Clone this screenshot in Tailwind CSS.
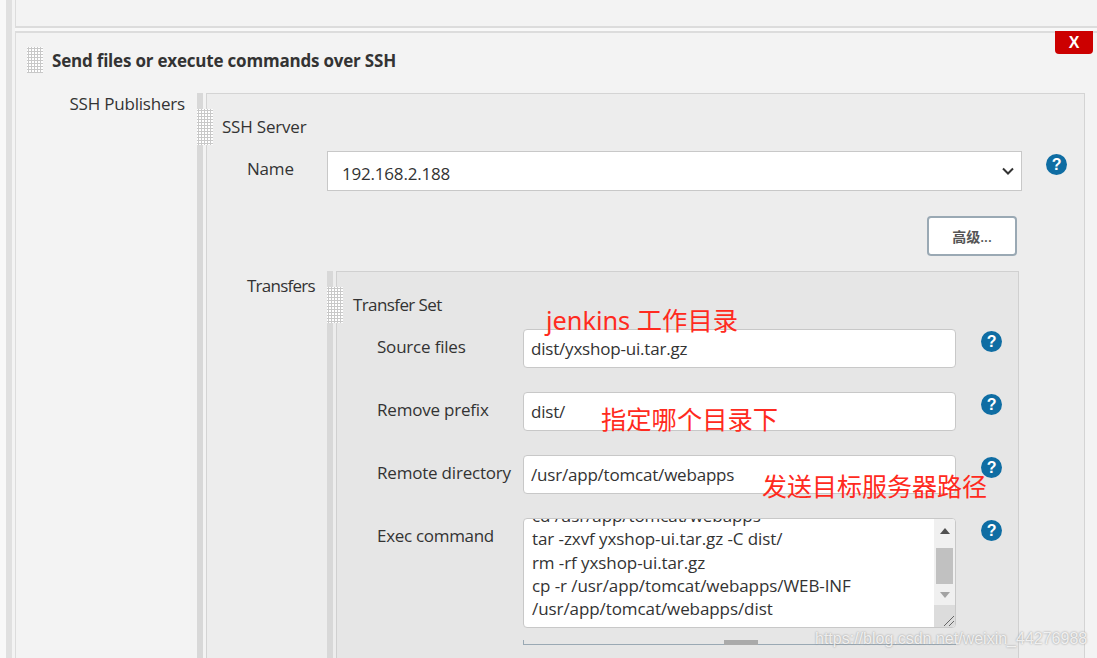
<!DOCTYPE html>
<html lang="zh">
<head>
<meta charset="UTF-8">
<title>Send files or execute commands over SSH</title>
<script src="https://cdn.jsdelivr.net/npm/@tailwindcss/browser@4"></script>
</head>
<body class="bg-[#f8f8f8]">
<div id="page" class="relative w-[1097px] h-[658px] overflow-hidden flex font-['Open_Sans','Noto_Sans_CJK_SC',sans-serif] text-[17px] tracking-[-0.2px] text-[#333]">
  <!-- rail on the left -->
  <div class="w-[6px] shrink-0"></div>
  <div class="w-[6px] shrink-0 bg-[#e0e0e0]"></div>
  <div class="w-[3px] shrink-0 bg-[#f3f3f3]"></div>

  <main class="flex-1 flex flex-col bg-[#f8f8f8]">
    <div class="h-[28px] shrink-0 bg-[#f3f3f3] border-l border-b-2 border-[#dcdcdc]"></div>
    <div class="h-[3px] shrink-0"></div>

    <section class="relative flex-1 bg-[#f3f3f3] border-l border-t-2 border-[#dcdcdc]">
      <button class="absolute right-[4px] top-[-2px] w-[38px] h-[23px] bg-[#cc0000] rounded-b-[4px] text-white font-bold text-[16px] font-['Liberation_Sans',sans-serif] tracking-normal leading-[23px]">X</button>
      <div class="absolute left-[11px] top-[14px] w-[16px] h-[26px] bg-white bg-[radial-gradient(#c8c8c8_1px,transparent_1.2px)] bg-[length:3px_3px]"></div>

      <h2 class="pl-[36px] pt-[15px] h-[60px] font-bold text-[#333] text-[17px] leading-[26px]">Send files or execute commands over SSH</h2>

      <div class="flex">
        <div class="w-[169px] shrink-0 text-right leading-[22px]">SSH Publishers</div>
        <!-- ssh server block -->
        <div class="ml-[12px] w-[6px] shrink-0 bg-[#d8d8d8]"></div>
        <div class="relative ml-[3px] w-[879px] h-[600px] bg-[#ededed] border border-[#d4d4d4]">
          <div class="absolute left-[-10px] top-[15px] w-[16px] h-[36px] bg-white bg-[radial-gradient(#c8c8c8_1px,transparent_1.2px)] bg-[length:3px_3px]"></div>
          <div class="pl-[15px] pt-[21px] leading-[24px]">SSH Server</div>

          <div class="flex mt-[12px]">
            <label class="w-[120px] pl-[40px] pt-[6px] leading-[24px]">Name</label>
            <div class="w-[695px] h-[40px] bg-white border border-[#c8c8c8] flex items-center justify-between pl-[14px] pr-[7px]">
              <span class="pt-[6px]">192.168.2.188</span>
              <svg width="12" height="8" viewBox="0 0 12 8"><path d="M1 1.5 6 6.5 11 1.5" fill="none" stroke="#333" stroke-width="2"/></svg>
            </div>
            <div class="ml-[24px] pt-[3px]">
              <svg width="21" height="21" viewBox="0 0 21 21"><circle cx="10.5" cy="10.5" r="10.5" fill="#0f6da3"/><text x="10.5" y="16" text-anchor="middle" fill="#fff" font-family="Liberation Sans" font-weight="700" font-size="16">?</text></svg>
            </div>
          </div>

          <div class="flex justify-end pr-[67px] mt-[25px]">
            <button class="w-[90px] h-[40px] bg-white border-2 border-[#9aa9b4] rounded-[4px] text-[14px] font-semibold text-[#555] tracking-normal">高级...</button>
          </div>

          <div class="flex mt-[15px]">
            <label class="w-[120px] pl-[40px] pt-[3px] leading-[24px] tracking-[-0.75px]">Transfers</label>
            <div class="w-[6px] shrink-0 bg-[#d8d8d8]"></div>
            <!-- transfer set block -->
            <div class="relative ml-[3px] w-[683px] h-[400px] bg-[#e6e6e6] border border-[#d0d0d0]">
              <div class="absolute left-[-10px] top-[15px] w-[16px] h-[36px] bg-white bg-[radial-gradient(#c8c8c8_1px,transparent_1.2px)] bg-[length:3px_3px]"></div>
              <div class="pl-[16px] pt-[21px] leading-[24px] tracking-[-0.6px]">Transfer Set</div>

              <div class="flex mt-[12px] h-[63px]">
                <label class="w-[186px] pl-[40px] pt-[6px] leading-[24px]">Source files</label>
                <div class="w-[433px] h-[39px] bg-white border border-[#c8c8c8] rounded-[4px] pl-[7px] leading-[38px]">dist/yxshop-ui.tar.gz</div>
                <svg class="ml-[25px] mt-[2px]" width="21" height="21" viewBox="0 0 21 21"><circle cx="10.5" cy="10.5" r="10.5" fill="#0f6da3"/><text x="10.5" y="16" text-anchor="middle" fill="#fff" font-family="Liberation Sans" font-weight="700" font-size="16">?</text></svg>
              </div>
              <div class="flex h-[63px]">
                <label class="w-[186px] pl-[40px] pt-[6px] leading-[24px]">Remove prefix</label>
                <div class="w-[433px] h-[39px] bg-white border border-[#c8c8c8] rounded-[4px] pl-[7px] leading-[38px]">dist/</div>
                <svg class="ml-[25px] mt-[2px]" width="21" height="21" viewBox="0 0 21 21"><circle cx="10.5" cy="10.5" r="10.5" fill="#0f6da3"/><text x="10.5" y="16" text-anchor="middle" fill="#fff" font-family="Liberation Sans" font-weight="700" font-size="16">?</text></svg>
              </div>
              <div class="flex h-[63px]">
                <label class="w-[186px] pl-[40px] pt-[6px] leading-[24px]">Remote directory</label>
                <div class="w-[433px] h-[39px] bg-white border border-[#c8c8c8] rounded-[4px] pl-[7px] leading-[38px]">/usr/app/tomcat/webapps</div>
                <svg class="ml-[25px] mt-[2px]" width="21" height="21" viewBox="0 0 21 21"><circle cx="10.5" cy="10.5" r="10.5" fill="#0f6da3"/><text x="10.5" y="16" text-anchor="middle" fill="#fff" font-family="Liberation Sans" font-weight="700" font-size="16">?</text></svg>
              </div>
              <div class="flex">
                <label class="w-[186px] pl-[40px] pt-[6px] leading-[24px] tracking-[-0.3px]">Exec command</label>
                <div>
                  <div class="flex w-[433px] h-[110px] bg-white border border-[#c8c8c8] rounded-[4px] overflow-hidden">
                    <div class="flex-1 pl-[8px] leading-[23.3px] mt-[-15px] whitespace-nowrap tracking-[-0.08px]">
                      <div>cd /usr/app/tomcat/webapps</div>
                      <div>tar -zxvf yxshop-ui.tar.gz -C dist/</div>
                      <div>rm -rf yxshop-ui.tar.gz</div>
                      <div>cp -r /usr/app/tomcat/webapps/WEB-INF</div>
                      <div>/usr/app/tomcat/webapps/dist</div>
                    </div>
                    <!-- scrollbar -->
                    <div class="w-[21px] shrink-0 flex flex-col bg-[#f0f0f0]">
                      <div class="h-[29px] flex items-center justify-center pb-[5px]"><svg width="10" height="6" viewBox="0 0 10 6"><path d="M5 0 10 6H0z" fill="#505050"/></svg></div>
                      <div class="h-[36px] mx-[2px] bg-[#c1c1c1]"></div>
                      <div class="h-[21px] flex items-center justify-center"><svg width="10" height="6" viewBox="0 0 10 6"><path d="M0 0H10L5 6z" fill="#a3a3a3"/></svg></div>
                      <div class="relative flex-1 bg-[#dcdcdc]">
                        <svg class="absolute right-0 bottom-0" width="12" height="12" viewBox="0 0 12 12"><path d="M11 1 1 11M11 6 6 11" stroke="#666" fill="none"/></svg>
                      </div>
                    </div>
                  </div>
                  <div class="relative mt-[12px] w-[433px] h-[5px] border-l border-b border-[#9aa9b4]">
                    <div class="absolute left-[200px] top-0 w-[34px] h-[5px] bg-[#aaa]"></div>
                  </div>
                </div>
                <svg class="ml-[25px] mt-[2px]" width="21" height="21" viewBox="0 0 21 21"><circle cx="10.5" cy="10.5" r="10.5" fill="#0f6da3"/><text x="10.5" y="16" text-anchor="middle" fill="#fff" font-family="Liberation Sans" font-weight="700" font-size="16">?</text></svg>
              </div>
            </div>
          </div>
        </div>
      </div>
    </section>
  </main>

  <!-- annotations drawn on top of the screenshot -->
  <div class="absolute left-[546px] top-[303px] text-[25.3px] leading-[34px] text-[#ff2a20] tracking-normal font-['Noto_Sans','Noto_Sans_CJK_SC',sans-serif]">jenkins 工作目录</div>
  <div class="absolute left-[601px] top-[402px] text-[25.3px] leading-[34px] text-[#ff2a20] tracking-normal font-['Noto_Sans','Noto_Sans_CJK_SC',sans-serif]">指定哪个目录下</div>
  <div class="absolute left-[762px] top-[469px] text-[25px] leading-[34px] text-[#ff2a20] tracking-normal font-['Noto_Sans','Noto_Sans_CJK_SC',sans-serif]">发送目标服务器路径</div>
  <div class="absolute left-[815px] top-[629px] text-[16px] leading-[20px] tracking-normal text-white/80 font-['Liberation_Sans',sans-serif] [text-shadow:0_0_2px_#888]">https://blog.csdn.net/weixin_44276988</div>
</div>
</body>
</html>
